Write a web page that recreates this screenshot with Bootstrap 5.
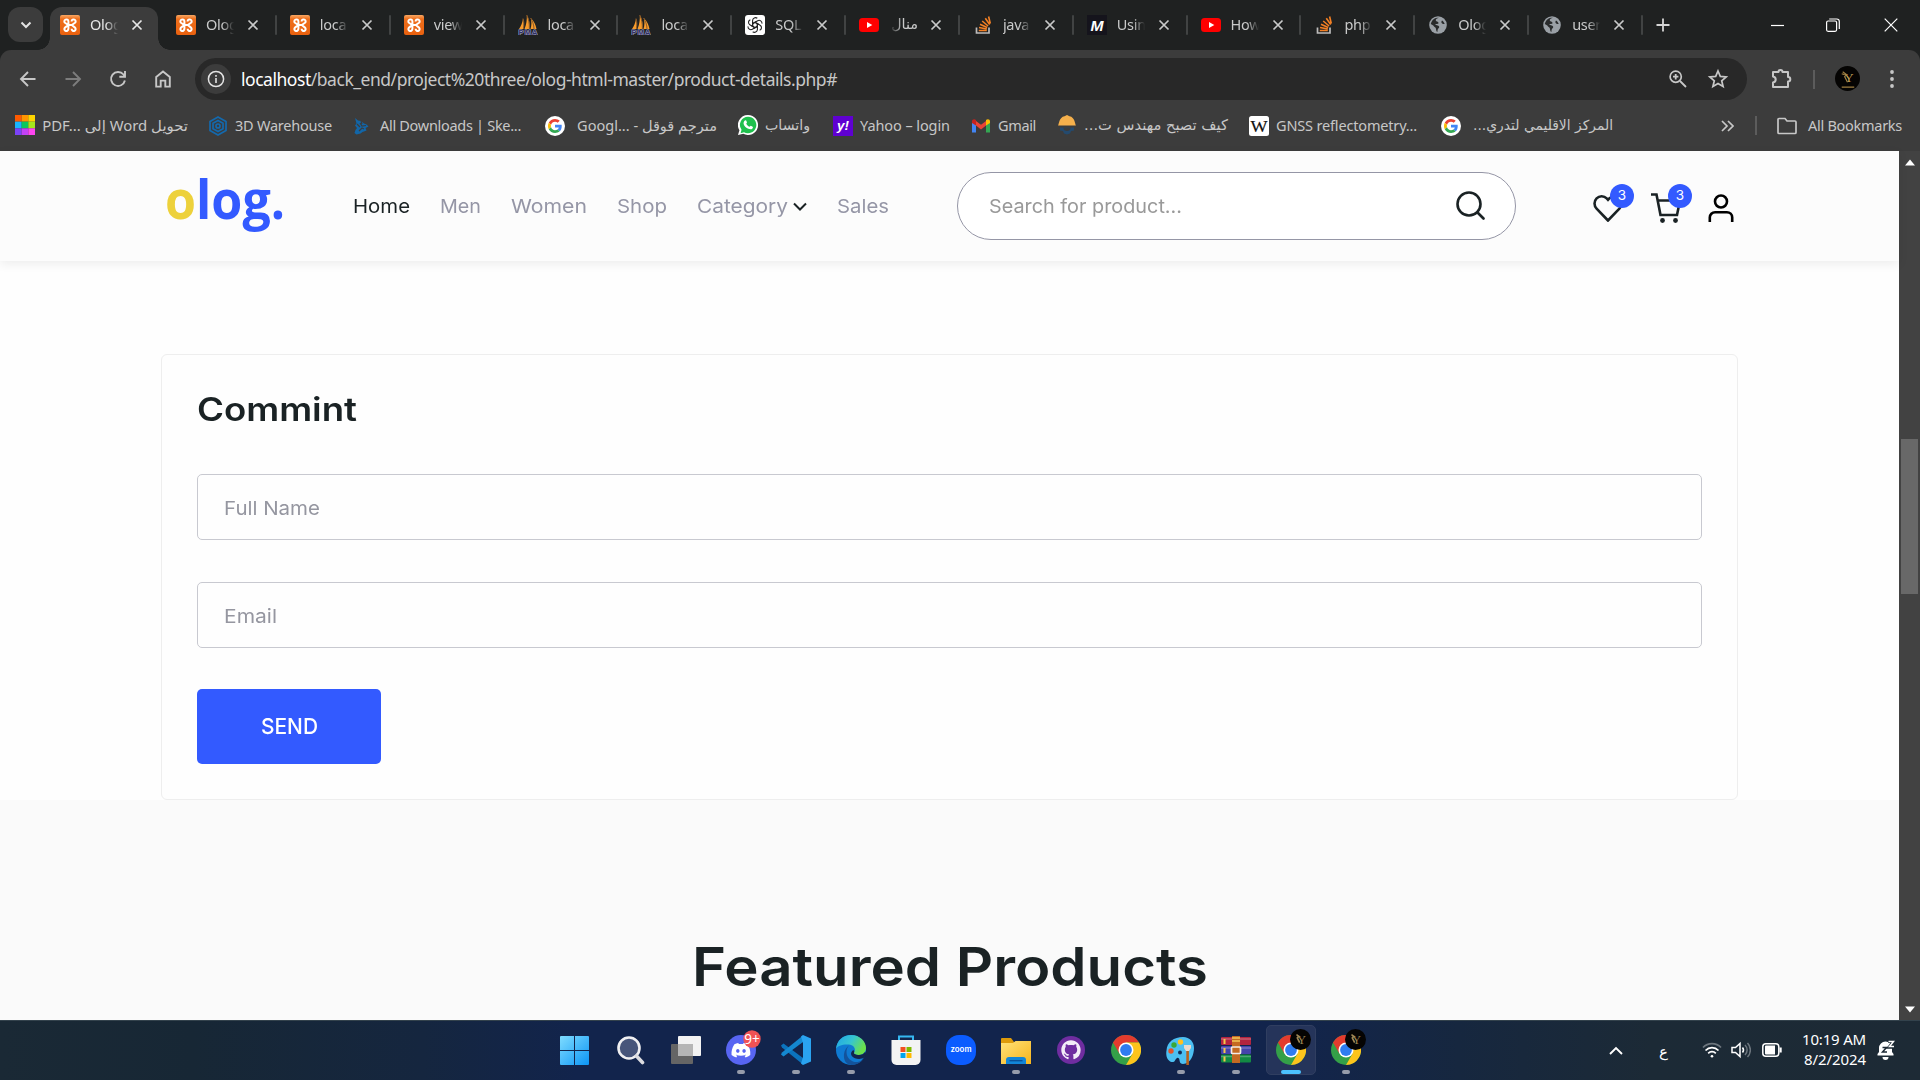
<!DOCTYPE html>
<html lang="en">
<head>
<meta charset="utf-8">
<title>Olog - Product Details</title>
<link href="https://cdn.jsdelivr.net/npm/bootstrap@5.3.0/dist/css/bootstrap.min.css" rel="stylesheet">
<style>
html,body{height:100%;overflow:hidden}
body{font-family:"Noto Sans","DejaVu Sans",sans-serif;background:#fff;width:1920px;height:1080px}
svg{display:block;flex:none}
.fit{white-space:nowrap;display:block;flex:none}
.ar{font-family:"DejaVu Sans",sans-serif}

/* browser chrome */
.strip{height:50px;background:#1f2121;padding-left:8px;color:#c9caca}
.tabmenu{width:35px;height:35px;margin-top:7px;border-radius:12px;background:#3c3c3c}
.tab{width:113.85px;height:50px;padding-left:14px;position:relative;flex:none}
.tab .ttl{width:29px;margin-left:10px;overflow:hidden;white-space:nowrap;font-size:14.5px;letter-spacing:-.3px;-webkit-mask-image:linear-gradient(90deg,#000 55%,transparent 97%);mask-image:linear-gradient(90deg,#000 55%,transparent 97%)}
.tab .ttl.rtl{-webkit-mask-image:linear-gradient(270deg,#000 55%,transparent 97%);mask-image:linear-gradient(270deg,#000 55%,transparent 97%)}
.tab .cls{margin-left:12px}
.tab::after{content:"";width:2px;height:20px;background:#414343;border-radius:1px;position:absolute;right:-1px;top:15px}
.tab.nosep::after{display:none}
.tab.current{width:108px;height:43px;margin:7px 4px 0 7px;padding:0 0 7px 10px;background:#3c3c3c;border-radius:12px 12px 0 0;color:#e6e6e6}
.tab.current::after,.tab.current::before{content:"";display:block;position:absolute;bottom:0;top:auto;right:-12px;width:12px;height:12px;background:radial-gradient(circle at 100% 0,transparent 11.5px,#3c3c3c 12px);border-radius:0}
.tab.current::before{right:auto;left:-12px;background:radial-gradient(circle at 0 0,transparent 11.5px,#3c3c3c 12px)}
.tools{height:58px;background:#3c3c3c;border-radius:11px 11px 0 0;color:#c7c7c7;padding-left:18px}
.toolwrap{background:#1f2121}
.omni{width:1552px;height:42px;border-radius:21px;background:#282828;margin-left:22px;padding-left:6px;padding-right:18px}
.info{width:30px;height:30px;border-radius:50%;background:#3c3c3c}
.url{font-size:17.5px;color:#c7c7c7}
.url b{font-weight:400;color:#fff}
.marks{height:43px;background:#3c3c3c;color:#c7c7c7;padding:0 0 8px 15px;font-size:14.5px;gap:20px}
.bm{display:flex;align-items:center;gap:7px;flex:none}
.marks .ar{font-size:13.5px}
.vbar{width:2px;height:19px;background:#5c5c5c}

/* shop page */
.shop{height:869px;font-family:Inter,"Open Sans",sans-serif;color:#1a2224}
.page{width:1899px;background:#fefefe}
.topnav{height:110px;background:#fcfcfc;box-shadow:0 3px 10px rgba(0,0,0,.07);position:relative;padding-left:165px}
.brand{font:700 53px/52px "Open Sans",sans-serif;color:#335aff;margin-top:-14px}
.brand i{font-style:normal;color:#edd13b}
.menu{font-size:19.3px;color:#9596a6;margin-left:68px}
.menu .on{color:#1a2224}
.find{width:559px;height:68px;border:1px solid #9596a6;border-radius:34px;background:#fff;padding:3px 30px 0 31px;font-size:19px;color:#999}
.cnt{position:absolute;left:17px;top:-10px;width:24px;height:24px;border-radius:50%;background:#335aff;color:#fff;font-size:13.5px;line-height:23px;text-align:center}
.box{width:1577px;height:446px;margin:93px 0 0 161px;border:1px solid #eee;border-radius:6px;padding:36px 35px 0;background:#fefefe}
.box h3{font-size:32px;font-weight:600;line-height:38px;margin:0 0 45px}
.field{height:66px;border:1px solid #c8c9d0;border-radius:5px;padding:5px 0 0 26px;margin-bottom:42px;font-size:19px;color:#9596a0}
.send{width:184px;height:75px;background:#335aff;border:0;border-radius:5px;color:#fff;font-size:22px;font-weight:500;margin-top:-1px;padding:0;justify-content:center}
.feat{background:#fafafa;height:220px;padding-top:135px}
.feat h2{font-size:53.5px;font-weight:600;line-height:64px;margin:0 auto}
.sbar{width:21px;background:#424242;padding:8px 0 7px}
.thumb{width:17px;height:155px;background:#686868}

/* taskbar */
.task{height:60px;background:linear-gradient(90deg,#1a2935 0,#172735 10%,#15263f 22%,#12244c 30%,#12244c 67%,#16273f 76%,#1c2a36 86%,#1d2a35 100%);box-shadow:inset 0 1px #33424c;color:#fff;padding-left:548px}
.cell{width:55px;height:60px;position:relative;display:flex;align-items:center;justify-content:center;flex:none}
.cell.run::after{content:"";position:absolute;width:8px;height:4px;border-radius:2px;background:#969cab;bottom:6px;left:23.5px}
.cell.now::before{content:"";position:absolute;left:2.5px;top:5px;width:50px;height:50px;border-radius:5px;background:#25345a;border:1px solid #303e60}
.cell.now::after{width:20px;left:17.5px;background:#4cc2ff}
.cell svg{position:relative}
.clock{font-size:15px;line-height:20px;align-items:flex-end;margin-bottom:3px}
</style>
<script src="https://cdn.jsdelivr.net/npm/bootstrap@5.3.0/dist/js/bootstrap.bundle.min.js"></script>
</head>
<body class="d-flex flex-column">
<svg width="0" height="0" class="position-absolute">
<defs>
<linearGradient id="gw" x1="0" y1="0" x2="1" y2="1"><stop stop-color="#7fdcff"/><stop offset="1" stop-color="#0c95f5"/></linearGradient>
<linearGradient id="ge" x1="0" y1="0" x2="1" y2=".4"><stop stop-color="#1fa4e8"/><stop offset=".55" stop-color="#36c5d0"/><stop offset="1" stop-color="#6be04c"/></linearGradient>
<linearGradient id="gf" x1="0" y1="0" x2="1" y2="1"><stop stop-color="#ffe27a"/><stop offset="1" stop-color="#f7b51c"/></linearGradient>
<linearGradient id="gx" x1="0" y1="0" x2="0" y2="1"><stop stop-color="#f7a865"/><stop offset=".2" stop-color="#ef6f1c"/><stop offset="1" stop-color="#e9610f"/></linearGradient>
</defs>
<symbol id="x" viewBox="0 0 12 12"><path d="M1.500 1.500l9 9M10.500 1.500l-9 9" stroke="currentColor" stroke-width="1.700" fill="none"/></symbol>
<symbol id="xampp" viewBox="0 0 20 20"><rect width="20" height="20" rx="2" fill="url(#gx)"/><path d="M8.200 10L5 12.600a2 2 0 0 0 .4 3.200c1.500.6 3-.4 3-2V6.500c0-1.700-1.600-2.400-2.900-1.800-1.400.6-1.500 2.200-.5 3.100zM11.800 10L15 12.600a2 2 0 0 1-.4 3.200c-1.500.6-3-.4-3-2M11.800 10L15 7.800c1-.9.9-2.500-.5-3.100-1.300-.6-2.900.1-2.900 1.800M7.500 10h5" fill="none" stroke="#fff" stroke-width="2" stroke-linejoin="round"/></symbol>
<symbol id="sails" viewBox="0 0 20 20"><path d="M1 14C3 11 4.500 8 5 3.500c1 4 1 7 .5 10.500zM6.500 14C8.500 9 9 5 8.800 0c2.700 5 3.200 9.500 2.600 14zM12.500 14c1.200-4 1.200-7 .2-11 3.500 3 5 7 5.800 11z" fill="#f89c2c"/><path d="M5.500 14C6 9 6 7 5 3.500M11.400 14C11.500 8 10.500 4 8.800 0M16 14c0-4-1.500-8-3.300-11" stroke="#8a5a28" fill="none"/></symbol>
<symbol id="gpt" viewBox="0 0 20 20"><rect width="20" height="20" rx="3" fill="#fff"/><g fill="none" stroke="#222" stroke-width="1.100"><path id="pt" d="M10 7.300l-2.400 1.400v-3.200a2.900 2.900 0 0 1 4.700-2.200M10 7.300l3.700 2.200"/><use href="#pt" transform="rotate(60 10 10)"/><use href="#pt" transform="rotate(120 10 10)"/><use href="#pt" transform="rotate(180 10 10)"/><use href="#pt" transform="rotate(240 10 10)"/><use href="#pt" transform="rotate(300 10 10)"/></g></symbol>
<symbol id="yt" viewBox="0 0 20 20"><rect y="3" width="20" height="14" rx="3.500" fill="#f00"/><path d="M8 7l5.300 3L8 13z" fill="#fff"/></symbol>
<symbol id="so" viewBox="0 0 20 20"><path d="M3.500 12.500V18h12.500v-5.500" fill="none" stroke="#bcbbbb" stroke-width="1.700"/><path d="M5.800 15.500h8M6 12.500l7.800 1.500M7 9.300l7.200 3.200M9.200 6l5.900 5M12.300 3.200l4.400 6.300M15.600 1.500l1.700 7" stroke="#f48024" stroke-width="1.600"/></symbol>
<symbol id="globe" viewBox="0 0 20 20"><circle cx="10" cy="10" r="8.800" fill="#9aa0a6"/><path d="M11 2.800c-2 .5-3.500 1.200-3.200 2.700s2.400.6 2.700 2.200c.3 1.400-1.500 1.300-3 1.300-.8 1.500 3.500 1 3.700 2.800.2 1.500-1.400 1.600-1.600 3.200l-.2 2c-1.300-.5-1.200-2.500-1.500-3.600-.4-1.300-2.200-1.600-2.600-2.900L2.800 9C4 4.500 7 2.600 11 2.800zM14 5.500c1.200.6 2.300 2 2.700 3.500-1 .3-2.800-.2-3.200-1.300-.3-.9.100-1.600.5-2.200z" fill="#292b2c"/></symbol>
<symbol id="goog" viewBox="0 0 20 20"><circle cx="10" cy="10" r="10" fill="#fff"/><g transform="translate(3 3) scale(.292)"><path fill="#EA4335" d="M24 9.500c3.540 0 6.710 1.220 9.210 3.600l6.850-6.850C35.900 2.380 30.470 0 24 0 14.620 0 6.510 5.380 2.560 13.220l7.980 6.190C12.430 13.720 17.740 9.500 24 9.500z"/><path fill="#4285F4" d="M46.980 24.550c0-1.570-.15-3.090-.38-4.550H24v9.020h12.940c-.58 2.960-2.260 5.480-4.780 7.180l7.730 6c4.510-4.180 7.090-10.360 7.090-17.650z"/><path fill="#FBBC05" d="M10.530 28.590c-.48-1.450-.76-2.990-.76-4.590s.27-3.140.76-4.590l-7.980-6.190C.92 16.460 0 20.120 0 24c0 3.880.92 7.540 2.560 10.780l7.970-6.190z"/><path fill="#34A853" d="M24 48c6.480 0 11.930-2.130 15.890-5.810l-7.730-6c-2.150 1.450-4.920 2.300-8.160 2.300-6.260 0-11.570-4.220-13.470-9.910l-7.980 6.190C6.510 42.620 14.620 48 24 48z"/></g></symbol>
<symbol id="chrome" viewBox="0 0 30 30"><circle cx="15" cy="15" r="15" fill="#34a048"/><path d="M2 7.500A15 15 0 0 1 28 7.500H15L8.500 18.750z" fill="#e33b2e"/><path d="M28 7.500A15 15 0 0 1 15 30L21.500 18.750 15 7.500z" fill="#fdc41c"/><circle cx="15" cy="15" r="7.500" fill="#fff"/><circle cx="15" cy="15" r="5.900" fill="#2f7cf0"/></symbol>
</svg>

<div class="strip d-flex">
  <div class="tabmenu d-flex align-items-center justify-content-center"><svg width="14" height="14" viewBox="0 0 14 14"><path d="M2.500 4.500L7 9l4.500-4.500" fill="none" stroke="#e3e3e3" stroke-width="2"/></svg></div>
  <div class="tab current d-flex align-items-center"><svg width="20" height="20"><use href="#xampp"/></svg><span class="ttl">Olog</span><svg class="cls" width="12" height="12"><use href="#x"/></svg></div>
  <div class="tab d-flex align-items-center"><svg width="20" height="20"><use href="#xampp"/></svg><span class="ttl">Olog</span><svg class="cls" width="12" height="12"><use href="#x"/></svg></div>
  <div class="tab d-flex align-items-center"><svg width="20" height="20"><use href="#xampp"/></svg><span class="ttl">loca</span><svg class="cls" width="12" height="12"><use href="#x"/></svg></div>
  <div class="tab d-flex align-items-center"><svg width="20" height="20"><use href="#xampp"/></svg><span class="ttl">view</span><svg class="cls" width="12" height="12"><use href="#x"/></svg></div>
  <div class="tab d-flex align-items-center"><svg width="20" height="20" viewBox="0 0 20 20"><use href="#sails"/><text x="10" y="19.700" font-family="Liberation Sans" font-size="7.500" font-weight="700" text-anchor="middle" textLength="19" fill="#303063" stroke="#a9a9cc" stroke-width="1" paint-order="stroke">PMA</text></svg><span class="ttl">loca</span><svg class="cls" width="12" height="12"><use href="#x"/></svg></div>
  <div class="tab d-flex align-items-center"><svg width="20" height="20" viewBox="0 0 20 20"><use href="#sails"/><text x="10" y="19.700" font-family="Liberation Sans" font-size="7.500" font-weight="700" text-anchor="middle" textLength="19" fill="#303063" stroke="#a9a9cc" stroke-width="1" paint-order="stroke">PMA</text></svg><span class="ttl">loca</span><svg class="cls" width="12" height="12"><use href="#x"/></svg></div>
  <div class="tab d-flex align-items-center"><svg width="20" height="20"><use href="#gpt"/></svg><span class="ttl">SQL</span><svg class="cls" width="12" height="12"><use href="#x"/></svg></div>
  <div class="tab d-flex align-items-center"><svg width="20" height="20"><use href="#yt"/></svg><span class="ttl rtl ar" dir="rtl">منال</span><svg class="cls" width="12" height="12"><use href="#x"/></svg></div>
  <div class="tab d-flex align-items-center"><svg width="20" height="20"><use href="#so"/></svg><span class="ttl">java</span><svg class="cls" width="12" height="12"><use href="#x"/></svg></div>
  <div class="tab d-flex align-items-center"><svg width="20" height="20" viewBox="0 0 20 20"><rect width="20" height="20" fill="#15141c"/><text x="10" y="15.500" text-anchor="middle" textLength="13" lengthAdjust="spacingAndGlyphs" font-family="Liberation Sans" font-style="italic" font-weight="700" font-size="15" fill="#fff">M</text></svg><span class="ttl">Usin</span><svg class="cls" width="12" height="12"><use href="#x"/></svg></div>
  <div class="tab d-flex align-items-center"><svg width="20" height="20"><use href="#yt"/></svg><span class="ttl">How</span><svg class="cls" width="12" height="12"><use href="#x"/></svg></div>
  <div class="tab d-flex align-items-center"><svg width="20" height="20"><use href="#so"/></svg><span class="ttl">php</span><svg class="cls" width="12" height="12"><use href="#x"/></svg></div>
  <div class="tab d-flex align-items-center"><svg width="20" height="20"><use href="#globe"/></svg><span class="ttl">Olog</span><svg class="cls" width="12" height="12"><use href="#x"/></svg></div>
  <div class="tab d-flex align-items-center"><svg width="20" height="20"><use href="#globe"/></svg><span class="ttl">user</span><svg class="cls" width="12" height="12"><use href="#x"/></svg></div>
  <div class="d-flex align-items-center flex-grow-1" style="padding-left:14px">
    <svg width="14" height="14" viewBox="0 0 14 14"><path d="M7 .5v13M.5 7h13" stroke="#d5d5d5" stroke-width="1.800"/></svg>
    <svg class="ms-auto" width="13" height="13" viewBox="0 0 13 13"><path d="M0 6.500h13" stroke="#fff" stroke-width="1.200"/></svg>
    <svg width="14" height="14" viewBox="0 0 14 14" style="margin:0 44px 0 42px"><rect x=".6" y="3" width="10" height="10.300" rx="1.500" fill="none" stroke="#fff" stroke-width="1.200"/><path d="M3.200 1h7.500a2.600 2.600 0 0 1 2.600 2.600V11" fill="none" stroke="#fff" stroke-width="1.200"/></svg>
    <svg width="14" height="14" viewBox="0 0 14 14" style="margin-right:22px"><path d="M.7.700l12.600 12.600M13.300.700L.7 13.300" stroke="#fff" stroke-width="1.200"/></svg>
  </div>
</div>
<div class="toolwrap"><div class="tools d-flex align-items-center">
  <svg width="20" height="20" viewBox="0 0 20 20"><path d="M17.500 10H3M10 3l-7 7 7 7" fill="none" stroke="currentColor" stroke-width="1.900"/></svg>
  <svg width="20" height="20" viewBox="0 0 20 20" style="margin-left:25px;color:#7d7d7d"><path d="M2.500 10H17M10 3l7 7-7 7" fill="none" stroke="currentColor" stroke-width="1.900"/></svg>
  <svg width="20" height="20" viewBox="0 0 20 20" style="margin-left:25px"><path d="M16.900 11.500A7 7 0 1 1 15.500 5.500L17 7.500M17 2v5.700h-5.700" fill="none" stroke="currentColor" stroke-width="1.900"/></svg>
  <svg width="20" height="20" viewBox="0 0 20 20" style="margin-left:25px"><path d="M3.200 8L10 2.500 16.800 8v9.600h-4.500v-6H7.700v6H3.200z" fill="none" stroke="currentColor" stroke-width="1.900"/></svg>
  <div class="omni d-flex align-items-center">
    <div class="info d-flex align-items-center justify-content-center"><svg width="18" height="18" viewBox="0 0 18 18"><circle cx="9" cy="9" r="7.600" fill="none" stroke="#e3e3e3" stroke-width="1.500"/><path d="M9 8v5M9 5v1.700" stroke="#e3e3e3" stroke-width="1.600"/></svg></div>
    <span class="fit url" style="margin-left:10px" data-w="596"><b>localhost</b>/back_end/project%20three/olog-html-master/product-details.php#</span>
    <svg class="ms-auto" width="20" height="20" viewBox="0 0 20 20"><circle cx="7.700" cy="7.700" r="5.600" fill="none" stroke="currentColor" stroke-width="1.700"/><path d="M12 12l6 6M7.700 5v5.400M5 7.700h5.400" stroke="currentColor" stroke-width="1.800"/></svg>
    <svg width="22" height="22" viewBox="0 0 22 22" style="margin-left:19px"><path d="M11 3l2.300 5.400 5.900.5-4.500 3.900 1.400 5.700-5.100-3-5.100 3 1.400-5.700-4.500-3.900 5.900-.5z" fill="none" stroke="currentColor" stroke-width="1.700"/></svg>
  </div>
  <svg width="24" height="24" viewBox="0 0 24 24" style="margin-left:22px"><path d="M4 5h5.500a2 2 0 0 1 4 0H19v5a2.300 2.300 0 0 1 0 4.600V20H4v-4.500c3.600-.6 3.600-5.400 0-6z" fill="none" stroke="currentColor" stroke-width="2" stroke-linejoin="round"/></svg>
  <span class="vbar" style="margin-left:20px"></span>
  <svg width="25" height="25" viewBox="0 0 26 26" style="margin-left:20px;margin-top:-2px"><circle cx="13" cy="13" r="13" fill="#050403"/><text x="14.500" y="17" text-anchor="middle" font-family="Liberation Serif" font-size="14" fill="#c7a35a">Y</text><path d="M8 6l4 3-2 2 3 6M7 8l3 1M7 22h13" stroke="#a07f42" stroke-width="1.200" fill="none"/></svg>
  <svg width="6" height="20" viewBox="0 0 6 20" fill="currentColor" style="margin-left:29px"><circle cx="3" cy="3" r="1.900"/><circle cx="3" cy="10" r="1.900"/><circle cx="3" cy="17" r="1.900"/></svg>
</div></div>
<div class="marks d-flex align-items-center">
  <div class="bm"><svg width="20" height="20" viewBox="0 0 21 21"><path fill="#ff5a00" d="M0 0h7v7H0z"/><path fill="#ff9500" d="M7 0h7v7H7z"/><path fill="#ffd500" d="M14 0h7v7h-7z"/><path fill="#19b5fe" d="M0 7h7v7H0z"/><path fill="#0cc75b" d="M7 7h7v7H7z"/><path fill="#a5e81c" d="M14 7h7v7h-7z"/><path fill="#7b42f6" d="M0 14h7v7H0z"/><path fill="#c341f5" d="M7 14h7v7H7z"/><path fill="#ff45f0" d="M14 14h7v7h-7z"/></svg><span class="fit" dir="rtl" data-w="146">تحويل Word إلى PDF...&lrm;</span></div>
  <div class="bm"><svg width="20" height="20" viewBox="0 0 20 20" fill="none" stroke="#1469ad" stroke-width="1.700"><path d="M10 1l8 4.500v9L10 19l-8-4.500v-9z"/><path d="M10 4.500l5 2.700v5.600l-5 2.700-5-2.700V7.200z"/><circle cx="10" cy="10" r="2"/></svg><span class="fit" data-w="97">3D Warehouse</span></div>
  <div class="bm"><svg width="20" height="20" viewBox="0 0 20 20"><path d="M3 2l3 2.500 3 .5 3 2.500 2.500 1 2 2-3 1.500 1 2.500-4 1.500-2 1.500-4 1-2-1.500 1-3 1.500-2-2-2.500 1.500-2z" fill="#1266a8"/><path d="M8 7l2 3 4-.5M7 15l3-3 2 1M5 8l3 3M9 5l1 3" stroke="#3c3c3c" stroke-width="1.200" fill="none"/></svg><span class="fit" style="margin-left:1px" data-w="141">All Downloads | Ske...</span></div>
  <div class="bm" style="margin-left:4px"><svg width="20" height="20"><use href="#goog"/></svg><span class="fit" style="margin-left:5px" dir="rtl" data-w="140">مترجم قوقل - Googl...&lrm;</span></div>
  <div class="bm" style="margin-left:1px"><svg width="20" height="20" viewBox="0 0 21 21"><path d="M10.500 0a10.500 10.500 0 1 1-5 19.700L0 21l1.500-5A10.500 10.500 0 0 1 10.500 0z" fill="#fff"/><path d="M10.600 1.800a8.700 8.700 0 1 1-4.300 16.300l-3.600 1 1-3.500A8.700 8.700 0 0 1 10.600 1.800z" fill="#1fc04d"/><path d="M7.200 5.700c.6-.5 1.200-.3 1.400.2l.8 1.800c.2.600-.8 1.200-.7 1.600.8 1.600 1.800 2.500 3.300 3.100.5.100 1-1.200 1.500-1l1.900.9c.5.300.2 1.300-.2 1.800-1 1.200-2.800 1.100-4.300.4-2.400-1-4.200-2.900-4.900-4.900-.4-1.500.1-3 1.200-3.900z" fill="#fff"/></svg><span class="fit ar" dir="rtl" data-w="45">واتساب</span></div>
  <div class="bm" style="margin-left:3px"><svg width="20" height="20" viewBox="0 0 20 20"><path fill="#5f01d1" d="M0 0h20v20H0z"/><text x="10" y="14" text-anchor="middle" font-family="Liberation Sans" font-weight="700" font-style="italic" font-size="13.500" fill="#fff">y!</text></svg><span class="fit" data-w="90">Yahoo – login</span></div>
  <div class="bm" style="margin-left:1px"><svg width="20" height="20" viewBox="0 0 20 20"><path d="M1 5v11.500h4V8z" fill="#4285f4"/><path d="M19 5v11.500h-4V8z" fill="#34a853"/><path d="M5 9.500l5 4 5-4V5l-5 3.800L5 5z" fill="#ea4335"/><path d="M1 5.500C1 3 3.500 2.800 5 4v5.500L1 7z" fill="#c5221f"/><path d="M19 5.500C19 3 16.500 2.800 15 4v5.500L19 7z" fill="#fbbc04"/></svg><span class="fit" data-w="38">Gmail</span></div>
  <div class="bm" style="margin-left:1px"><svg width="20" height="20" viewBox="0 0 20 20"><path d="M1 10.500C2 9.500 2 2 7.500 1.200L10 0l2.500 1.200C18 2 18 9.500 19 10.500z" fill="#f5b04c"/><path d="M3 12.500h14v3l-3 .5-1 2.500-3 1-3-1L6 16l-3-.5z" fill="#244a6e"/><path d="M6.500 12.500h7a3.500 3.500 0 0 1-7 0z" fill="#3c3c3c"/></svg><span class="fit ar" dir="rtl" data-w="144">كيف تصبح مهندس ت...</span></div>
  <div class="bm" style="margin-left:1px"><svg width="20" height="20" viewBox="0 0 20 20"><rect width="20" height="20" rx="2.500" fill="#fff"/><text x="10" y="15.500" text-anchor="middle" font-family="Liberation Serif" font-size="17" textLength="17" lengthAdjust="spacingAndGlyphs" fill="#111" stroke="#111" stroke-width=".2">W</text></svg><span class="fit" data-w="141">GNSS reflectometry...</span></div>
  <div class="bm" style="margin-left:4px"><svg width="20" height="20"><use href="#goog"/></svg><span class="fit ar" style="margin-left:5px" dir="rtl" data-w="140">المركز الاقليمي لتدري...</span></div>
  <svg width="13" height="12" viewBox="0 0 13 12" class="ms-auto"><path d="M1 1l5 5-5 5M7 1l5 5-5 5" fill="none" stroke="currentColor" stroke-width="1.700"/></svg>
  <span class="vbar" style="margin-left:1px"></span>
  <div class="bm" style="gap:11px;margin-right:18px"><svg width="20" height="18" viewBox="0 0 20 18"><path d="M1 2.500V15.500a1 1 0 0 0 1 1h16a1 1 0 0 0 1-1V5a1 1 0 0 0-1-1h-8L8 1.500H2a1 1 0 0 0-1 1z" fill="none" stroke="currentColor" stroke-width="1.700"/></svg><span class="fit" data-w="94">All Bookmarks</span></div>
</div>

<div class="shop d-flex">
  <div class="page">
    <nav class="topnav d-flex align-items-center">
      <div class="brand fit" data-w="120"><i>o</i>log.</div>
      <div class="menu d-flex align-items-center" style="gap:30px">
        <span class="fit on" data-w="57">Home</span><span class="fit" data-w="41">Men</span><span class="fit" data-w="76">Women</span><span class="fit" data-w="50">Shop</span>
        <span class="d-flex align-items-center" style="gap:5px"><span class="fit" data-w="91">Category</span><svg width="14" height="10" viewBox="0 0 14 10" style="margin-top:2px"><path d="M1 1.500l6 6 6-6" fill="none" stroke="#1a2224" stroke-width="2"/></svg></span>
        <span class="fit" data-w="52">Sales</span>
      </div>
      <div class="find d-flex align-items-center justify-content-between" style="margin-left:68px"><span class="fit" data-w="193">Search for product...</span><svg width="29" height="29" viewBox="0 0 29 29" style="margin-top:-4px"><circle cx="13" cy="13" r="11.500" fill="none" stroke="#1a2224" stroke-width="2.600"/><path d="M21.500 21.500l6 6" stroke="#1a2224" stroke-width="2.600" stroke-linecap="round"/></svg></div>
      <div class="position-relative" style="margin:4px 0 0 77px"><svg width="30" height="28" viewBox="0 0 30 28"><path d="M15 26.500L3.600 14.600a7.300 7.300 0 0 1 0-10.200 7 7 0 0 1 10.100 0L15 5.800l1.300-1.400a7 7 0 0 1 10.100 0 7.300 7.300 0 0 1 0 10.200z" fill="none" stroke="#1a2224" stroke-width="2.600"/></svg><span class="cnt">3</span></div>
      <div class="position-relative" style="margin:4px 0 0 28px"><svg width="30" height="30" viewBox="0 0 30 30"><path d="M0 1.500h5.500l4 20.500h16.500L29 7.500H7" fill="none" stroke="#1a2224" stroke-width="2.600"/><circle cx="11.500" cy="27.500" r="2.400" fill="#1a2224"/><circle cx="24.500" cy="27.500" r="2.400" fill="#1a2224"/></svg><span class="cnt" style="top:-9px">3</span></div>
      <svg width="26" height="28" viewBox="0 0 26 28" style="margin-left:27px;margin-top:4px"><circle cx="13" cy="7.500" r="6" fill="none" stroke="#000" stroke-width="2.600"/><path d="M1.800 28v-4.500a5.300 5.300 0 0 1 5.300-5.300h11.800a5.300 5.300 0 0 1 5.300 5.300V28" fill="none" stroke="#000" stroke-width="2.600"/></svg>
    </nav>
    <section class="box">
      <h3 class="fit" data-w="160">Commint</h3>
      <div class="field d-flex align-items-center"><span class="fit" data-w="96">Full Name</span></div>
      <div class="field d-flex align-items-center"><span class="fit" data-w="53">Email</span></div>
      <button class="send btn d-flex align-items-center"><span class="fit" data-w="57">SEND</span></button>
    </section>
    <section class="feat"><h2 class="fit" data-w="516">Featured Products</h2></section>
  </div>
  <div class="sbar d-flex flex-column align-items-center">
    <svg width="10" height="7" viewBox="0 0 10 7"><path d="M0 6.500L5 .5l5 6z" fill="#fff"/></svg>
    <div class="thumb" style="margin-top:273px"></div>
    <svg class="mt-auto" width="10" height="7" viewBox="0 0 10 7"><path d="M0 .5l5 6 5-6z" fill="#fff"/></svg>
  </div>
</div>

<div class="task d-flex">
  <div class="cell"><svg width="29" height="29" viewBox="0 0 29 29" style="left:-1px"><path d="M1 0h13v14H0V1a1 1 0 0 1 1-1zM15 0h13a1 1 0 0 1 1 1v13H15zM0 15h14v14H1a1 1 0 0 1-1-1zM15 15h14v13a1 1 0 0 1-1 1H15z" fill="url(#gw)"/></svg></div>
  <div class="cell"><svg width="28" height="29" viewBox="0 0 28 29"><circle cx="12" cy="12" r="10.500" fill="#47557a" stroke="#f0f0f2" stroke-width="2.600"/><path d="M19.500 20l6 6.500" stroke="#dcdce0" stroke-width="3.600" stroke-linecap="round"/></svg></div>
  <div class="cell"><svg width="30" height="28" viewBox="0 0 30 28"><rect y="8" width="22" height="20" rx="1" fill="#656565"/><rect x="7" width="23" height="20" rx="1" fill="#f2f2f2"/><path d="M7 8h15v12H7z" fill="#b5b5b5"/></svg></div>
  <div class="cell run"><svg width="42" height="40" viewBox="0 -2 42 40"><circle cx="21" cy="18" r="15" fill="#5865f2"/><g transform="translate(11.500 8.800) scale(1.180)" fill="#fff"><path d="M13.545 2.907a13.227 13.227 0 0 0-3.257-1.011.05.05 0 0 0-.052.025c-.141.25-.297.577-.406.833a12.190 12.190 0 0 0-3.658 0 8.258 8.258 0 0 0-.412-.833.051.051 0 0 0-.052-.025c-1.125.194-2.220.534-3.257 1.011C.356 6.024-.213 9.047.066 12.032a13.276 13.276 0 0 0 4.016 2.057c.330-.439.620-.882.874-1.348a8.875 8.875 0 0 1-1.276-.665l.263-.221c2.619 1.196 5.454 1.196 8.092 0l.263.221a8.254 8.254 0 0 1-1.280.665c.24.465.515.909.874 1.348a13.235 13.235 0 0 0 4.022-2.057c.334-3.451-.559-6.449-2.366-9.125zm-8.198 7.307c-.789 0-1.438-.724-1.438-1.612 0-.889.637-1.613 1.438-1.613.807 0 1.450.73 1.438 1.613 0 .888-.637 1.612-1.438 1.612zm5.316 0c-.788 0-1.438-.724-1.438-1.612 0-.889.637-1.613 1.438-1.613.807 0 1.451.73 1.438 1.613 0 .888-.631 1.612-1.438 1.612z"/></g><circle cx="32" cy="7" r="8.700" fill="#f05254"/><text x="32" y="12" text-anchor="middle" font-family="Noto Sans" font-size="13.500" fill="#fff">9+</text></svg></div>
  <div class="cell run"><svg width="30" height="30" viewBox="0 0 30 30"><path d="M0 10.500l2.500-2L22 23v6.500L1 12.500z" fill="#0b73bd"/><path d="M0 19.500l2.500 2L22 7V.5L1 17.500z" fill="#1488d0"/><path d="M22 0l8 3.500v23L22 30l-2-1.500L22 22V8l-2-6.500z" fill="#2aa3f0"/></svg></div>
  <div class="cell run"><svg width="30" height="30" viewBox="0 0 30 30"><circle cx="15" cy="15" r="15" fill="#0f7ad2"/><path d="M0 14C1 5 7 0 15 0c9 0 15 6.500 15 13 0 4.500-3.500 7-7.500 7-3 0-5-1.200-4.500-2.200 2-2.200 1.200-7.800-5-8.300C7 9 1.500 10.500 0 14z" fill="url(#ge)"/><path d="M10.500 17c0 7 6 10.500 11 10 2.500-.3 4.500-1.500 6-3C24.500 28 20 30 15.500 30 9 29.500 7.500 24 8 19c.5-4 2.500-6.500 5-8.500-1.500 1.500-2.500 3.500-2.500 6.500z" fill="#13539b"/><path d="M18 17.800c-.5 1 1.500 2.200 4.500 2.200 3 0 5.500-1 6.800-3.500l1 3-2 3c-4 2.500-10 1.500-12.500-1.500-1.500-2-.5-4.500 1-5.500 1-.7 1.700.7 1.200 2.300z" fill="#12244c"/></svg></div>
  <div class="cell"><svg width="30" height="30" viewBox="0 0 30 30"><path d="M8 7V1.500h14V7" fill="none" stroke="#35b7f1" stroke-width="2"/><path d="M.5 5h29v20a5 5 0 0 1-5 5h-19a5 5 0 0 1-5-5z" fill="#f3f3f3"/><path d="M9.500 12h5v5h-5z" fill="#f25022"/><path d="M15.500 12h5v5h-5z" fill="#7fba00"/><path d="M9.500 18h5v5h-5z" fill="#00a4ef"/><path d="M15.500 18h5v5h-5z" fill="#ffb900"/></svg></div>
  <div class="cell"><svg width="30" height="30" viewBox="0 0 30 30"><rect width="30" height="30" rx="13" fill="#0b5cff"/><text x="15" y="17.200" text-anchor="middle" textLength="21" lengthAdjust="spacingAndGlyphs" font-family="Inter" font-weight="600" font-size="7.500" fill="#fff">zoom</text></svg></div>
  <div class="cell run"><svg width="30" height="27" viewBox="0 0 30 27" style="top:1px"><path d="M0 1a1 1 0 0 1 1-1h9l3 4H30v5H0z" fill="#dd9a0b"/><path d="M0 5h12l2.500-2H30v23H0z" fill="url(#gf)"/><path d="M5 26v-4a3 3 0 0 1 3-3h14a3 3 0 0 1 3 3v4z" fill="#1286d8"/><path d="M8.500 22.700h13" stroke="#0a4f96" stroke-width="1.300"/></svg></div>
  <div class="cell"><svg width="28" height="28" viewBox="0 0 28 28"><circle cx="14" cy="14" r="14" fill="#6f2da0"/><g transform="translate(4.300 4.300) scale(1.210)"><path fill="#f3ecf7" d="M8 0C3.580 0 0 3.580 0 8c0 3.540 2.290 6.530 5.470 7.590.4.070.55-.17.55-.38 0-.19-.01-.82-.01-1.490-2.010.37-2.530-.49-2.690-.94-.09-.23-.48-.94-.82-1.130-.28-.15-.68-.52-.01-.53.63-.01 1.080.58 1.230.82.72 1.210 1.870.87 2.330.66.07-.52.28-.87.510-1.070-1.780-.2-3.640-.89-3.640-3.950 0-.87.310-1.590.82-2.150-.08-.2-.36-1.020.08-2.120 0 0 .67-.21 2.200.82.64-.18 1.320-.27 2-.27s1.360.09 2 .27c1.530-1.040 2.200-.82 2.200-.82.44 1.100.16 1.920.08 2.120.51.56.82 1.270.82 2.150 0 3.070-1.870 3.750-3.650 3.950.29.25.54.73.54 1.480 0 1.070-.01 1.930-.01 2.200 0 .21.150.46.55.38A8.010 8.010 0 0 0 16 8c0-4.420-3.580-8-8-8z"/></g></svg></div>
  <div class="cell"><svg width="30" height="30"><use href="#chrome"/></svg></div>
  <div class="cell run"><svg width="29" height="29" viewBox="0 0 29 29"><path d="M17 1c7 0 11 5 11 11s-3 16-11 16c-4 0-3-4-4-5.500-1.500-2-3 0-4 2s-4 2-6 0C0 22 0 17 .5 14.500 1 6 8 1 17 1z" fill="#4cc0f2"/><circle cx="14.500" cy="6" r="2.700" fill="#ffc020"/><circle cx="8" cy="9" r="2.700" fill="#3aa836"/><circle cx="5" cy="15" r="2.700" fill="#e3542a"/><circle cx="14" cy="16.500" r="2" fill="#12305c"/><path d="M18 9h7v3l-2 3h-3l-2-3z" fill="#e8d9cc"/><path d="M20.300 15h2.600v14h-2.600z" fill="#b8621b"/></svg></div>
  <div class="cell run"><svg width="30" height="27" viewBox="0 0 30 27" style="top:-1px"><rect y="1" width="30" height="8" rx="1" fill="#b3243e"/><rect y="10" width="30" height="8" rx="1" fill="#4543ab"/><rect y="18.500" width="30" height="8" rx="1" fill="#128a43"/><path d="M0 3h30M0 12h30M0 20.500h30" stroke="#fff" stroke-opacity=".25" stroke-width="1.500"/><path d="M3.500 3v5M3.500 12v5M3.500 20.500v5" stroke="#f3c94b" stroke-width="2"/><path d="M11 0h8v27h-8z" fill="#c46a22"/><path d="M11 2h8M11 5h8" stroke="#f1c65a" stroke-width="1.700"/><rect x="10.500" y="11" width="9" height="6.500" rx="1" fill="none" stroke="#f1ece5" stroke-width="1.700"/></svg></div>
  <div class="cell run now"><svg width="30" height="30"><use href="#chrome"/></svg><svg class="position-absolute" width="21" height="21" viewBox="0 0 26 26" style="left:27px;top:9px"><circle cx="13" cy="13" r="13" fill="#050403"/><text x="14.500" y="18" text-anchor="middle" font-family="Liberation Serif" font-size="15" fill="#a08855">Y</text><path d="M8 7l3 2-2 2 3 6" stroke="#a08855" stroke-width="2" fill="none"/></svg></div>
  <div class="cell run"><svg width="30" height="30"><use href="#chrome"/></svg><svg class="position-absolute" width="21" height="21" viewBox="0 0 26 26" style="left:27px;top:9px"><circle cx="13" cy="13" r="13" fill="#050403"/><text x="14.500" y="18" text-anchor="middle" font-family="Liberation Serif" font-size="15" fill="#a08855">Y</text><path d="M8 7l3 2-2 2 3 6" stroke="#a08855" stroke-width="2" fill="none"/></svg></div>
  <div class="d-flex align-items-center ms-auto" style="margin-right:25px">
    <svg width="14" height="9" viewBox="0 0 14 9"><path d="M1 8l6-6 6 6" fill="none" stroke="#fff" stroke-width="1.900"/></svg>
    <span class="ar" style="font-size:15px;margin:4px 33px 0 36px;width:10px">ع</span>
    <svg width="20" height="18" viewBox="0 0 20 18" fill="none" stroke="#fff" stroke-width="1.700"><path d="M1 6.500a12.500 12.500 0 0 1 18 0" stroke="#6d767e"/><path d="M3.500 9.500a9 9 0 0 1 13 0M6.200 12.300a5.300 5.300 0 0 1 7.600 0"/><circle cx="10" cy="15.300" r="1.300" fill="#fff" stroke="none"/></svg>
    <svg width="20" height="18" viewBox="0 0 20 18" fill="none" stroke="#fff" stroke-width="1.500" style="margin-left:9px"><path d="M1 6.500h3.500L9 2.500v13l-4.500-4H1z"/><path d="M11.500 6.500a4 4 0 0 1 0 5"/><path d="M14 4a7 7 0 0 1 0 10M16.500 2a10 10 0 0 1 0 14" stroke="#6d767e"/></svg>
    <svg width="20" height="14" viewBox="0 0 20 14" style="margin-left:11px"><rect x=".8" y=".8" width="16" height="12.400" rx="3" fill="none" stroke="#fff" stroke-width="1.500"/><path d="M3 3.500a1 1 0 0 1 1-1h9v9H4a1 1 0 0 1-1-1zM17.500 4.500h2.200v5h-2.200z" fill="#fff"/></svg>
    <div class="clock d-flex flex-column" style="margin-left:20px"><span class="fit" data-w="64">10:19 AM</span><span class="fit" data-w="62">8/2/2024</span></div>
    <svg width="18" height="20" viewBox="0 0 18 20" style="margin-left:11px"><path d="M.5 15.500v-1.500l1.500-2V8a6.500 6.500 0 0 1 13 0v4l1.500 2v1.500z" fill="#fff"/><path d="M5.500 17h6a3 3 0 0 1-6 0z" fill="#fff"/><path d="M5.500 7.500h4l-4 4.500h4.500" fill="none" stroke="#1d2a35" stroke-width="1.500"/><path d="M11 1h5.500v1l-4 5H17" fill="none" stroke="#1d2a35" stroke-width="3.500"/><path d="M11.500 1.500h5l-4 5h4.500" fill="none" stroke="#fff" stroke-width="1.500"/></svg>
  </div>
</div>
<script>
// Give every label its set width: shop text by widening the glyphs,
// other Latin text by tracking, right-to-left text by size.
document.fonts.ready.then(function(){
  document.querySelectorAll('.fit').forEach(function(el){
    var w=+el.dataset.w;
    el.style.width='max-content';
    var n=el.getBoundingClientRect().width;
    if(el.dir==='rtl'){
      el.style.fontSize=(parseFloat(getComputedStyle(el).fontSize)*w/n)+'px';
    }else if(el.closest('.shop')){
      el.style.transformOrigin='0 50%';
      el.style.transform='scaleX('+(w/n)+')';
    }else{
      el.style.letterSpacing=((w-n)/el.textContent.length)+'px';
    }
    el.style.width=w+'px';
    if(el.closest('.shop')){
      // the scaled box keeps its flow width w while its glyphs stretch inside it
      var s=document.createElement('span');
      s.className='d-inline-block';
      s.style.transformOrigin='0 50%';
      s.style.transform=el.style.transform;
      while(el.firstChild)s.appendChild(el.firstChild);
      el.appendChild(s);
      el.style.transform='none';
    }
  });
});
</script>
</body>
</html>
